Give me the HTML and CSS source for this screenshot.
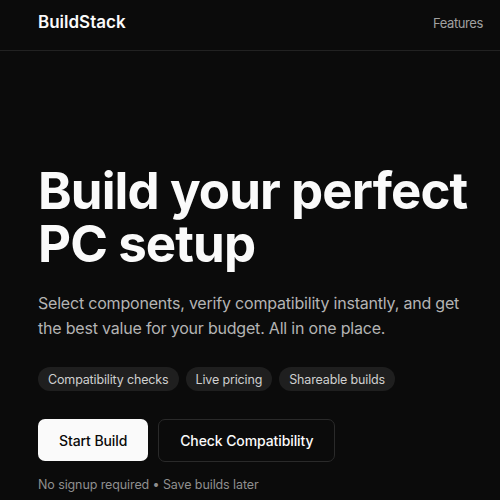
FILE: index.html
```html
<!DOCTYPE html>
<html lang="en">
<head>
<meta charset="utf-8">
<title>BuildStack</title>
<link rel="stylesheet" href="styles.css">
</head>
<body>
<header class="site-header">
  <div class="logo">BuildStack</div>
  <nav class="nav"><a href="#" class="nav-link">Features</a></nav>
</header>
<main class="hero">
  <h1 class="hero-title">Build your perfect PC setup</h1>
  <p class="hero-text">Select components, verify compatibility instantly, and get the best value for your budget. All in one place.</p>
  <ul class="chips">
    <li class="chip">Compatibility checks</li>
    <li class="chip">Live pricing</li>
    <li class="chip">Shareable builds</li>
  </ul>
  <div class="actions">
    <a href="#" class="btn btn-primary">Start Build</a>
    <a href="#" class="btn btn-secondary">Check Compatibility</a>
  </div>
  <p class="note">No signup required • Save builds later</p>
</main>
</body>
</html>
```
FILE: styles.css
```css
* { box-sizing: border-box; }
html, body { margin: 0; padding: 0; }
body {
  background: #0b0b0b;
  color: #fafafa;
  font-family: Inter, "Noto Sans", sans-serif;
  width: 500px;
  height: 500px;
  overflow: hidden;
}
.site-header {
  height: 51px;
  display: flex;
  align-items: center;
  justify-content: space-between;
  padding: 0 17px 6px 38px;
  border-bottom: 1px solid #222;
}
.logo {
  font-size: 17px;
  font-weight: 600;
  letter-spacing: 0;
  color: #fafafa;
}
.nav-link {
  font-size: 13px;
  letter-spacing: -0.4px;
  color: #a1a1a1;
  text-decoration: none;
}
.hero {
  padding: 113px 20px 0 38px;
}
.hero-title {
  margin: 0;
  font-size: 51px;
  line-height: 53px;
  font-weight: 700;
  letter-spacing: -0.9px;
  color: #fafafa;
  max-width: 450px;
}
.hero-text {
  margin: 21px 0 0;
  font-size: 16px;
  line-height: 24.5px;
  letter-spacing: -0.2px;
  color: #b4b4b4;
  max-width: 430px;
}
.chips {
  list-style: none;
  margin: 27px 0 0;
  padding: 0;
  display: flex;
  gap: 7px;
}
.chip {
  height: 24px;
  display: flex;
  align-items: center;
  padding: 0 10px;
  border-radius: 999px;
  background: #1f1f1f;
  color: #cfcfcf;
  font-size: 12.5px;
  letter-spacing: -0.15px;
}
.actions {
  margin-top: 28px;
  display: flex;
  gap: 10px;
  align-items: flex-start;
}
.btn {
  display: flex;
  align-items: center;
  justify-content: center;
  height: 42px;
  padding: 0 21px;
  border-radius: 7px;
  font-size: 14px;
  font-weight: 500;
  letter-spacing: -0.1px;
  text-decoration: none;
}
.btn-primary {
  background: #fafafa;
  color: #0a0a0a;
}
.btn-secondary {
  height: 43px;
  padding: 0 21px;
  background: #0b0b0b;
  color: #fafafa;
  border: 1px solid #2a2a2a;
}
.note {
  margin: 15px 0 0;
  font-size: 12.5px;
  letter-spacing: -0.1px;
  color: #8f8f8f;
}
```
